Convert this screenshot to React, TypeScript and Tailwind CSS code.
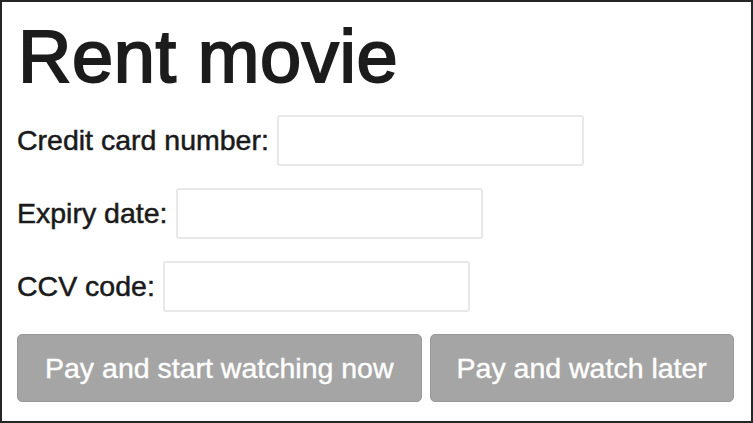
import React from "react";

const font = { fontFamily: '"Liberation Sans", Arial, Helvetica, sans-serif' };

function Row({ label }: { label: string }) {
  return (
    <div className="flex items-center gap-[8px]">
      <label className="text-[28.5px] leading-none text-[#1a1a1a] whitespace-nowrap [-webkit-text-stroke:0.5px_#1a1a1a]">
        {label}
      </label>
      <input
        type="text"
        className="h-[51px] w-[307px] rounded-[3px] border-2 border-[#e8e8e8] bg-white outline-none"
      />
    </div>
  );
}

export default function App() {
  return (
    <div
      style={font}
      className="box-border h-[423px] w-[753px] border-2 border-[#262626] bg-white pl-[15px] pt-[18px]"
    >
      <div className="flex flex-col gap-[22px]">
        <h1 className="h-[73px] pl-[1px] text-[74px] leading-[73px] font-normal tracking-[0.6px] text-[#1c1c1c] [-webkit-text-stroke:2px_#1c1c1c]">
          Rent movie
        </h1>
        <Row label="Credit card number:" />
        <Row label="Expiry date:" />
        <Row label="CCV code:" />
        <div className="flex gap-[8px]">
          <button className="h-[68px] rounded-[5px] border border-[#9a9a9a] bg-[#a5a5a5] px-[27px] text-[28.5px] leading-none text-white [-webkit-text-stroke:0.4px_#ffffff]">
            Pay and start watching now
          </button>
          <button className="h-[68px] rounded-[5px] border border-[#9a9a9a] bg-[#a5a5a5] px-[26px] text-[28.5px] leading-none text-white [-webkit-text-stroke:0.4px_#ffffff]">
            Pay and watch later
          </button>
        </div>
      </div>
    </div>
  );
}
